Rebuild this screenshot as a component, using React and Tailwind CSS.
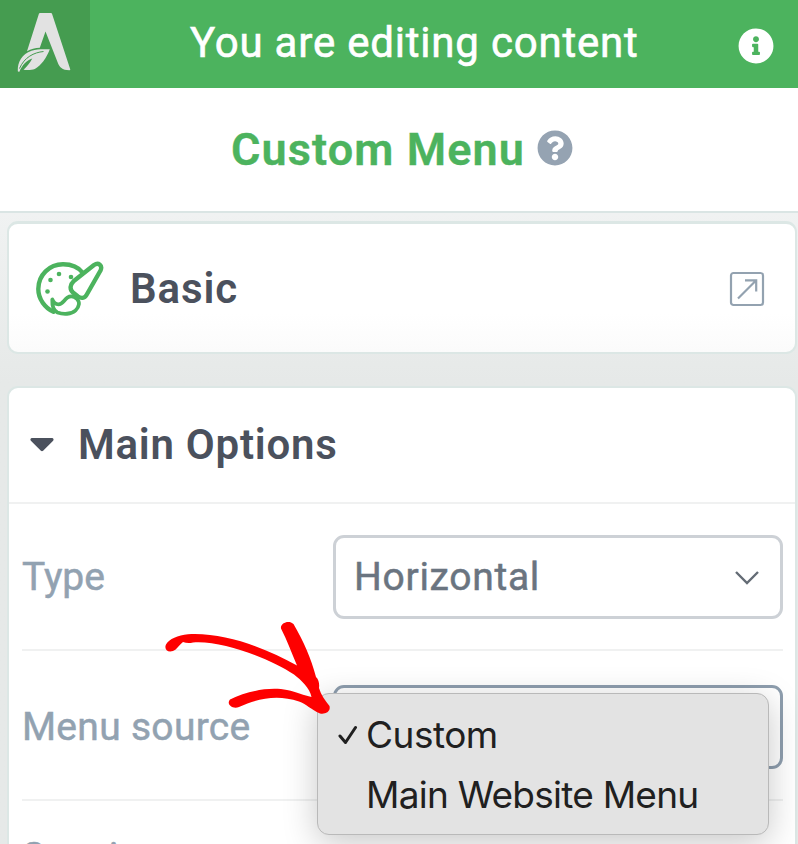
import { FaCaretDown, FaInfoCircle, FaQuestionCircle } from "react-icons/fa";

function AvadaLogo() {
  return (
    <svg width="90" height="88" viewBox="0 0 90 88" fill="#e2e2e2">
      <path d="M39 13.5Q39.400 13 40 13H51Q51.700 13 52 13.800L70.300 69.500Q70.300 70.300 69.500 70.300C62 70 59.500 67.500 57.500 62L45.500 31.500L39.800 47.800C35 48 31 49.200 27 51.200Z" />
      <path d="M49.800 49.300C46.500 58 41 65.800 34.800 69C31.500 70.300 27 70.300 23.500 69.800C26.500 67 30 63 32.300 58.500C27 60 22.500 64.500 19.200 72L17.800 71.300C17.500 62 22 54 31.500 50.800C38 48.700 44 49.300 49.800 49.300Z" />
      <path d="M43.500 51.500C34 52.500 24.500 57 19.500 68.500" fill="none" stroke="#459c50" strokeWidth="1" />
    </svg>
  );
}

function PaletteIcon() {
  return (
    <svg
      className="mt-[2px]"
      width="70"
      height="58"
      viewBox="0 0 70 58"
      fill="none"
      stroke="#4cb35e"
      strokeWidth="4.400"
      strokeLinecap="round"
      strokeLinejoin="round"
    >
      <path d="M48 13C43 6.500 36 4.300 28 4.300C14.500 4.300 3.300 15 3.300 29C3.300 39 10 48 18.500 51.800" />
      <path d="M38.500 21.300L59 5C63.500 2 67.800 5.300 65.500 10.500L51.500 35C49.500 38.500 46 38.500 43 36.500L38 32.500C34.500 29.500 35 24.500 38.500 21.300Z" />
      <path d="M32.500 37.500C28.500 40.500 27.500 44.300 23.500 44.300C20.500 44.300 18.500 42.500 17.300 39.500C17 46.500 18.500 50.800 22.500 52.500C28 54.500 36.500 54.500 40.500 50.500C44.500 46.500 45 42 42 39C39.300 36.300 35.500 35.500 32.500 37.500Z" strokeWidth="3.800" />
      <g fill="#4cb35e" stroke="none">
        <circle cx="12.500" cy="31.500" r="2.300" />
        <circle cx="15.500" cy="20" r="2.300" />
        <circle cx="24" cy="14" r="2.300" />
        <circle cx="36" cy="17" r="2.300" />
      </g>
    </svg>
  );
}

function OpenIcon() {
  return (
    <svg className="mt-[2px]" width="36" height="36" viewBox="0 0 36 36" fill="none" stroke="#93a2b0" strokeWidth="2.200">
      <rect x="2" y="2" width="32" height="32" rx="2.500" />
      <path d="M9 27.500L27 9.500M16 9.300H27.200V20.500" />
    </svg>
  );
}

function Arrow() {
  return (
    <svg
      className="absolute left-[150px] top-[600px] z-20"
      width="200"
      height="130"
      viewBox="0 0 200 130"
      fill="#fe0000"
    >
      <path d="M16 44.500C19 39 28 35 38 34.200C74 32 116 48 147 65.500C142 54 137 40 131 28.500C130 23 139 19.500 143.500 24C154 42 161 58 166 77C169 80 169.500 84 169 88C171 95 175 100 179.500 106C181 112 175 114.500 170 113.500C161 109.500 156 104 149 101.500C127 94 108 98.500 89 107C82 109.500 76 104 80 99.500C97 91 120 86.500 137 90C147 92 154 95.500 161.500 97C160 88 151 80 144 74.500C119 58 71 40 43 42.500C39 43.500 36 43 33 42C29 45 27 49.500 23 51C17 53 14 48.500 16 44.500Z" />
    </svg>
  );
}

export default function App() {
  return (
    <div className="relative flex h-[844px] w-[798px] flex-col overflow-hidden bg-[#e8eceb] font-['Roboto',sans-serif]">
      {/* top bar */}
      <header className="flex h-[88px] shrink-0 items-center bg-[#4cb35e] text-white">
        <div className="h-[88px] w-[90px] bg-[#459c50]">
          <AvadaLogo />
        </div>
        <div className="flex-1 pb-[3px] pl-[100px] text-[42px] tracking-[0.8px] whitespace-nowrap [-webkit-text-stroke:0.6px]">
          You are editing content
        </div>
        <FaInfoCircle className="mt-1 mr-6 size-9" />
      </header>

      {/* element title */}
      <div className="flex h-[125px] shrink-0 items-center gap-3 border-b-2 border-[#dae5e4] bg-white pl-[231px]">
        <h1 className="w-[294px] text-[45px] font-semibold tracking-[1.100px] whitespace-nowrap text-[#4cb35e] [-webkit-text-stroke:0.4px]">
          Custom Menu
        </h1>
        <FaQuestionCircle className="mb-[3px] size-9 text-[#95a3b2]" />
      </div>

      <main className="flex flex-col bg-linear-to-b from-[#f0f2f2] to-[#e6e9e8] to-[170px] pt-2 pr-px pl-[7px]">
        <section className="flex h-[133px] items-center rounded-[11px] border-2 border-t-3 border-[#dce7e5] bg-linear-to-b from-white from-70% to-[#fbfbfb] pr-[30px] pl-[26px]">
          <PaletteIcon />
          <h2 className="flex-1 pl-[25px] text-[42px] font-semibold tracking-[0.9px] text-[#4b515d]">Basic</h2>
          <OpenIcon />
        </section>

        <section className="mt-8 h-[600px] rounded-t-[11px] border-2 border-[#dce7e5] bg-white">
          <div className="flex h-[116px] items-center border-b-2 border-[#f0f1f1] pb-[2px] pl-5 text-[#4b515d]">
            <FaCaretDown className="size-[40px] -translate-x-[7px] -translate-y-px" />
            <h2 className="pl-[9px] text-[42px] font-semibold tracking-[0.750px]">Main Options</h2>
          </div>

          <div className="pr-3 pl-[13px] text-[39px] text-[#92a2b1] [-webkit-text-stroke:0.5px]">
            <div className="flex h-[147px] items-center border-b-2 border-[#f0f1f1]">
              <label className="w-[311px] pt-[2px]">Type</label>
              <div className="flex h-[84px] flex-1 items-center justify-between rounded-[11px] border-3 border-[#cdd1d6] pt-[2px] pr-5 pl-[18px] text-[#6a7480]">
                <span className="tracking-[0.7px]">Horizontal</span>
                <svg width="26" height="16" viewBox="0 0 26 16" fill="none" stroke="#646c75" strokeWidth="2.400">
                  <path d="M2 2L13 13L24 2" />
                </svg>
              </div>
            </div>
            <div className="flex h-[150px] items-center border-b-2 border-[#f0f1f1] pt-[3px]">
              <label className="w-[311px] pt-px tracking-[0.3px]">Menu source</label>
              <div className="h-[84px] flex-1 rounded-[11px] border-3 border-[#8e9eae]" />
            </div>
            <div className="pt-[27px]">Spacing</div>
          </div>
        </section>
      </main>

      {/* open select menu */}
      <ul className="absolute top-[693px] left-[317px] z-10 flex h-[142px] w-[452px] flex-col rounded-[12px] border border-[#b9b9b9] bg-[#e3e3e3] pt-[11px] font-['Inter',sans-serif] text-[37px] leading-[60px] text-[#202020] shadow-[0_8px_34px_rgba(0,0,0,0.22)]">
        <li className="flex items-center tracking-[-0.5px]">
          <svg className="mr-[8px] ml-5" width="20" height="20" viewBox="0 0 20 20" fill="none" stroke="#202020" strokeWidth="3" strokeLinecap="round" strokeLinejoin="round">
            <path d="M2 11L7.500 17.500L17.500 2.500" />
          </svg>
          Custom
        </li>
        <li className="pl-12 tracking-[-0.750px] whitespace-nowrap">Main Website Menu</li>
      </ul>

      <Arrow />
    </div>
  );
}
